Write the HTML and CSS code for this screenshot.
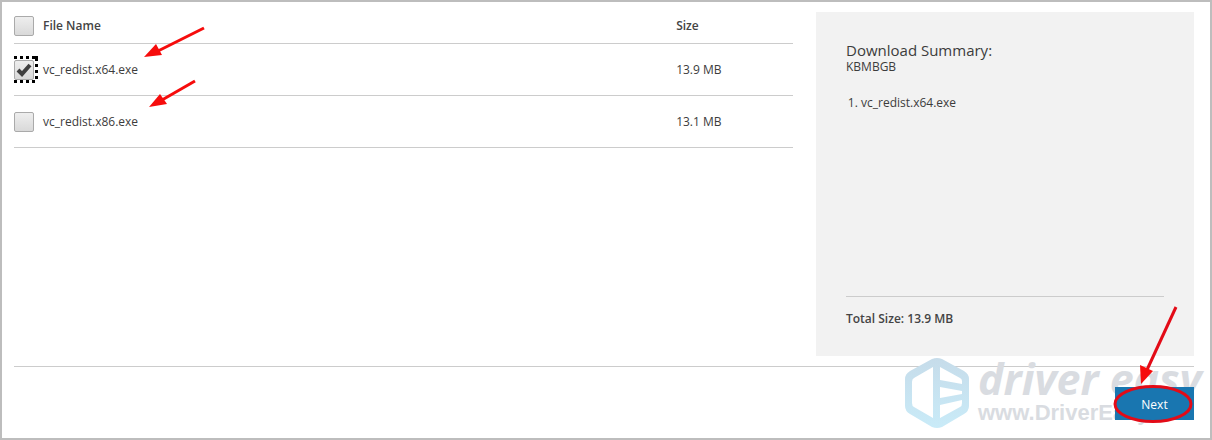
FILE: index.html
```html
<!DOCTYPE html>
<html lang="en">
<head>
<meta charset="utf-8">
<title>Choose the download you want</title>
<link rel="stylesheet" href="styles.css">
</head>
<body>
<main class="page">
  <div class="columns">
    <table class="files">
      <thead>
        <tr>
          <th class="name" scope="col">
            <div class="pick"><input class="check" type="checkbox" id="all"><label for="all">File Name</label></div>
          </th>
          <th scope="col">Size</th>
        </tr>
      </thead>
      <tbody>
        <tr>
          <td class="name">
            <div class="pick"><input class="check" type="checkbox" id="x64" checked><label for="x64">vc_redist.x64.exe</label>
              <svg class="focus" width="24" height="27" viewBox="0 0 24 27" aria-hidden="true"><g fill="none" stroke="#000" stroke-width="3"><path d="M0 1.5H24M0 25.5H24" stroke-dasharray="3"/><path d="M22.5 0V27" stroke-dasharray="5 3 3 3 3 3 3 4"/></g></svg>
              <svg class="arrow arrow-first" width="62" height="34" viewBox="0 0 62 34" aria-hidden="true"><path d="M60 2 14 25" stroke="#f60c0c" stroke-width="3" fill="none"/><path d="M0 31 12 18 18 29Z" fill="#f60c0c"/></svg>
            </div>
          </td>
          <td>13.9 MB</td>
        </tr>
        <tr>
          <td class="name">
            <div class="pick"><input class="check" type="checkbox" id="x86"><label for="x86">vc_redist.x86.exe</label>
              <svg class="arrow arrow-second" width="48" height="30" viewBox="0 0 48 30" aria-hidden="true"><path d="M46 2 13 21" stroke="#f60c0c" stroke-width="3" fill="none"/><path d="M0 28 11 15 18 25Z" fill="#f60c0c"/></svg>
            </div>
          </td>
          <td>13.1 MB</td>
        </tr>
      </tbody>
    </table>
    <aside class="summary">
      <h2>Download Summary:</h2>
      <p class="units">KBMBGB</p>
      <ol><li>vc_redist.x64.exe</li></ol>
      <p class="total">Total Size: 13.9 MB</p>
    </aside>
  </div>
  <footer class="actions">
    <div class="watermark" aria-hidden="true">
      <svg width="66" height="72" viewBox="0 0 66 72">
        <defs><linearGradient id="ice" x1="0" y1="0" x2="0" y2="1"><stop offset="0" stop-color="#c6dcea"/><stop offset="1" stop-color="#c9ebf8"/></linearGradient></defs>
        <path fill="url(#ice)" fill-rule="evenodd" d="M28 2Q33 0 38 2L60 14Q65 17 65 22V49Q65 54 60 57L38 70Q33 72 28 70L6 57Q1 54 1 49V22Q1 17 6 14ZM29 10 10 21Q8 22 8 25V46Q8 49 10 50L29 61ZM36 10V23L58 27V24Q58 22 56 21ZM36 30V41L58 37V34ZM36 48V61L56 50Q58 49 58 46V43Z"/>
      </svg>
      <div class="mark-text"><span class="brand">driver easy</span><span class="site">www.DriverEasy</span></div>
    </div>
    <button class="next" type="button">Next</button>
    <svg class="callout" width="82" height="122" viewBox="0 0 82 122" aria-hidden="true"><g fill="none" stroke="#e30b17" stroke-width="3"><path d="M64 3 34 68"/><ellipse cx="41" cy="100" rx="38" ry="17.5"/></g><path d="M29 80 28 61 41 67Z" fill="#f60c0c"/></svg>
  </footer>
</main>
</body>
</html>
```
FILE: styles.css
```css
* {
  box-sizing: border-box;
}

body {
  margin: 0;
  font: 12px/20px "Open Sans", "Noto Sans", sans-serif;
  color: #3c3c3c;
  background: #fff;
}

.page {
  min-height: 100vh;
  padding: 10px 16px 18px 12px;
  border: 2px solid #bdbdbd;
  overflow: hidden;
}

.columns {
  display: grid;
  grid-template-columns: 1fr 378px;
  gap: 23px;
  align-items: start;
  padding-bottom: 10px;
  border-bottom: 1px solid #ccc;
}

.files {
  width: 100%;
  border-collapse: separate;
  border-spacing: 0;
  table-layout: fixed;
}

.files th,
.files td {
  padding: 16px 0 15px;
  border-bottom: 1px solid #ccc;
  text-align: left;
  font-weight: 400;
}

.files th {
  padding: 4px 0 7px;
  font-weight: 600;
  color: #444;
}

.files .name {
  width: 85%;
}

.pick {
  display: flex;
  gap: 9px;
  align-items: center;
  position: relative;
}

.check {
  appearance: none;
  width: 20px;
  height: 20px;
  margin: 0;
  border: 1px solid #aaa;
  border-radius: 2px;
  background: linear-gradient(#eee, #d9d9d9);
}

.check:checked {
  background: url("data:image/svg+xml,%3Csvg xmlns='http://www.w3.org/2000/svg' viewBox='0 0 18 18'%3E%3Cpath d='M3 9l4 4 8-9' fill='none' stroke='%23404040' stroke-width='4'/%3E%3C/svg%3E"), linear-gradient(#eee, #d9d9d9);
}

.focus {
  position: absolute;
  left: 0;
  top: -4px;
  pointer-events: none;
}

.arrow {
  position: absolute;
  pointer-events: none;
}

.arrow-first {
  left: 130px;
  top: -34px;
}

.arrow-second {
  left: 135px;
  top: -33px;
}

.summary {
  display: flex;
  flex-direction: column;
  min-height: 344px;
  padding: 28px 30px 27px;
  background: #f2f2f2;
}

.summary h2 {
  margin: 0;
  font-size: 15px;
  line-height: 20px;
  font-weight: 400;
}

.summary p {
  margin: 0;
}

.summary .units {
  line-height: 14px;
}

.summary ol {
  margin: 19px 0;
  padding: 0 0 0 15px;
}

.summary .total {
  margin-top: auto;
  padding-top: 12px;
  border-top: 1px solid #ccc;
  font-weight: 600;
  color: #444;
}

.actions {
  position: relative;
  display: flex;
  justify-content: flex-end;
  padding-top: 20px;
}

.next {
  position: relative;
  width: 79px;
  height: 33px;
  padding: 2px 0 0;
  border: 0;
  background: #1976b0;
  color: #fff;
  font: inherit;
}

.callout {
  position: absolute;
  right: 0;
  top: -63px;
  pointer-events: none;
}

.watermark {
  position: absolute;
  right: -12px;
  top: -10px;
  display: flex;
  gap: 8px;
  width: 302px;
}

.watermark svg {
  flex: none;
}

.mark-text {
  display: flex;
  flex-direction: column;
  color: #d9dce1;
  white-space: nowrap;
}

.brand {
  font: italic 700 43px/44px "Open Sans", sans-serif;
}

.site {
  font: bold 22px/24px "Liberation Sans", sans-serif;
}
```
